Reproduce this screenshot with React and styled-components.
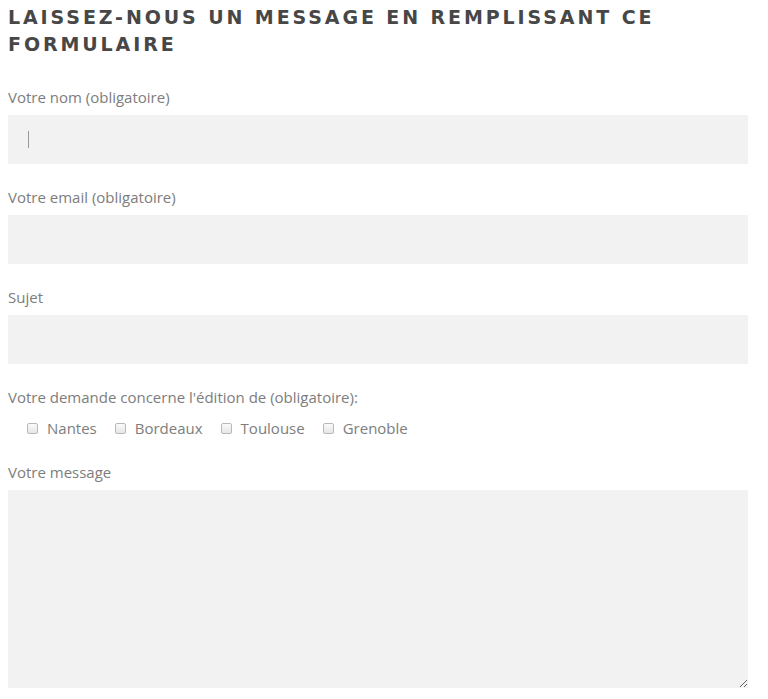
import styled, { createGlobalStyle } from "styled-components";

const GlobalStyle = createGlobalStyle`
  body {
    margin: 0;
    background: #fff;
    font-family: "Open Sans", "Liberation Sans", sans-serif;
  }
`;

const cities = ["Nantes", "Bordeaux", "Toulouse", "Grenoble"];

const App = () => {
  return (
    <>
      <GlobalStyle />
      <Form>
        <Title>Laissez-nous un message en remplissant ce formulaire</Title>

        <Field>
          <Label>Votre nom (obligatoire)</Label>
          <InputBox>
            <Input type="text" />
            <Caret />
          </InputBox>
        </Field>

        <Field>
          <Label>Votre email (obligatoire)</Label>
          <Input type="email" />
        </Field>

        <Field>
          <Label>Sujet</Label>
          <Input type="text" />
        </Field>

        <Field>
          <Label>Votre demande concerne l'édition de (obligatoire):</Label>
          <Checks>
            {cities.map((city) => (
              <Check key={city}>
                <Box />
                <span>{city}</span>
              </Check>
            ))}
          </Checks>
        </Field>

        <Field>
          <Label>Votre message</Label>
          <Message />
        </Field>
      </Form>
    </>
  );
};

export default App;

const Form = styled.form`
  padding: 4px 20px 0 8px;
  display: flex;
  flex-direction: column;
`;

const Title = styled.h2`
  margin: 0 0 29px;
  font-family: "DejaVu Sans", sans-serif;
  font-size: 19px;
  line-height: 27px;
  font-weight: 700;
  letter-spacing: 2.9px;
  text-transform: uppercase;
  color: #474747;
`;

const Field = styled.div`
  display: flex;
  flex-direction: column;
  margin-bottom: 23px;
`;

const Label = styled.label`
  font-size: 15px;
  line-height: 20px;
  color: #7d7d7d;
  margin-bottom: 8px;
`;

const InputBox = styled.div`
  position: relative;
`;

const Input = styled.input`
  box-sizing: border-box;
  width: 100%;
  height: 49px;
  border: none;
  outline: none;
  background: #f2f2f2;
  padding: 0 20px;
  font: inherit;
`;

const Caret = styled.span`
  position: absolute;
  left: 20px;
  top: 16px;
  width: 1px;
  height: 17px;
  background: #999;
`;

const Checks = styled.div`
  display: flex;
  gap: 18px;
  padding-left: 19px;
  margin-top: 3px;
  margin-bottom: 1px;
`;

const Check = styled.div`
  display: flex;
  align-items: center;
  gap: 9px;
  font-size: 15px;
  line-height: 20px;
  color: #7d7d7d;
`;

const Box = styled.span`
  box-sizing: border-box;
  width: 11px;
  height: 11px;
  border: 1px solid #b9b9b9;
  border-radius: 2px;
  background: linear-gradient(#fafafa, #e6e6e6);
`;

const Message = styled.textarea`
  box-sizing: border-box;
  width: 100%;
  height: 198px;
  border: none;
  outline: none;
  background: #f2f2f2;
  resize: vertical;
  font: inherit;
`;
